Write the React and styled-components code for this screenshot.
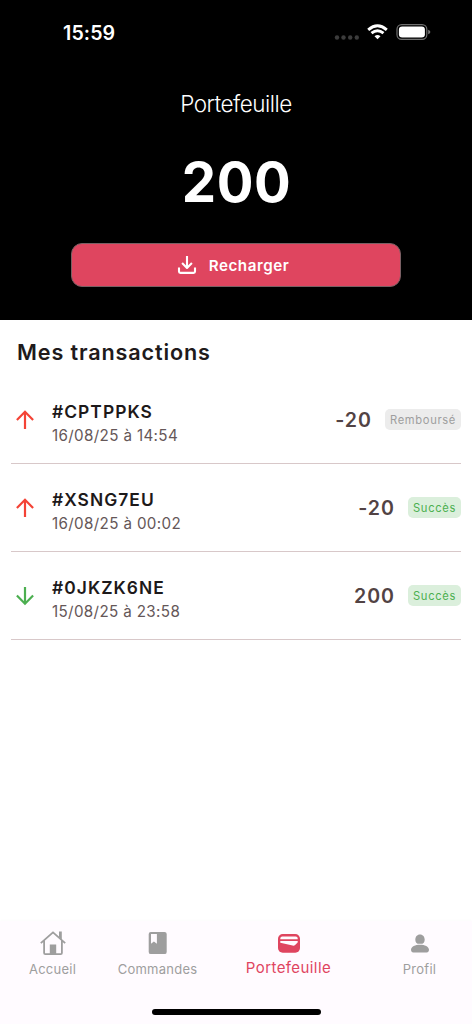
import React from "react";
import styled, { createGlobalStyle } from "styled-components";

const GlobalStyle = createGlobalStyle`
  * { box-sizing: border-box; }
  body {
    margin: 0;
    background: #fff;
    font-family: Inter, "Liberation Sans", sans-serif;
  }
`;

const Screen = styled.div`
  display: flex;
  flex-direction: column;
  width: 472px;
  height: 1024px;
  overflow: hidden;
  background: #fff;
`;

const Header = styled.header`
  display: flex;
  flex-direction: column;
  align-items: center;
  height: 320px;
  background: #000;
  color: #fff;
`;

const StatusBar = styled.div`
  display: flex;
  align-items: center;
  justify-content: space-between;
  width: 100%;
  height: 64px;
  padding: 0 41px 0 63px;
`;

const Clock = styled.span`
  padding-top: 2px;
  font-size: 19.6px;
  font-weight: 600;
  line-height: 24px;
  letter-spacing: 0.1px;
`;

const StatusIcons = styled.svg`
  display: block;
  width: 98px;
  height: 20px;
`;

const Title = styled.h1`
  margin: 26px 0 0;
  font-size: 22.5px;
  font-weight: 300;
  line-height: 28px;
  letter-spacing: -0.5px;
`;

const Balance = styled.div`
  margin-top: 28px;
  padding-left: 1px;
  font-size: 54.5px;
  font-weight: 700;
  line-height: 72px;
  letter-spacing: 0.5px;
`;

const RechargeButton = styled.button`
  display: flex;
  align-items: center;
  justify-content: center;
  gap: 12px;
  width: 330px;
  height: 44px;
  margin: 25px 0 0;
  padding: 0 6px 0 0;
  border: 1px solid #7a6064;
  border-radius: 11px;
  background: #df455f;
  color: #fff;
  font: 600 15.2px/20px Inter, sans-serif;
  letter-spacing: 0.55px;
`;

const ButtonLabel = styled.span`
  padding-top: 1px;
`;

const Main = styled.main`
  flex: 1;
  padding: 0 11px;
`;

const SectionTitle = styled.h2`
  margin: 0;
  padding: 18px 0 10px 6px;
  font-size: 21.6px;
  font-weight: 600;
  line-height: 28px;
  letter-spacing: 0.87px;
  color: #201a1b;
`;

const Transaction = styled.article`
  display: flex;
  align-items: center;
  height: 88px;
  border-bottom: 1px solid #d8c8c9;
`;

const Details = styled.div`
  flex: 1;
  padding: 8px 0 0 14px;
`;

const Reference = styled.div`
  font-size: 17.4px;
  font-weight: 600;
  line-height: 24px;
  letter-spacing: 1.05px;
  color: #1d191a;
`;

const DateText = styled.div`
  font-size: 15.2px;
  line-height: 24px;
  letter-spacing: 0.35px;
  color: #655758;
`;

const Amount = styled.div`
  margin-right: 13px;
  font-size: 19.6px;
  font-weight: 600;
  line-height: 24px;
  letter-spacing: 1px;
  color: #524344;
`;

const Badge = styled.span`
  width: ${(p) => (p.$success ? 53 : 76)}px;
  height: 21px;
  border-radius: 5px;
  background: ${(p) => (p.$success ? "#dbefdc" : "#ececec")};
  color: ${(p) => (p.$success ? "#4caf50" : "#9e9e9e")};
  font-size: 11.2px;
  font-weight: 400;
  line-height: 22px;
  letter-spacing: 0.65px;
  text-align: center;
`;

const BottomNav = styled.footer`
  height: 103px;
  background: #fffbff;
  box-shadow: 0 -1px 2px rgba(80, 50, 70, 0.015);
`;

const Tabs = styled.nav`
  display: grid;
  grid-template-columns: 105px 105px 157px 105px;
  height: 87px;
`;

const Tab = styled.div`
  display: flex;
  flex-direction: column;
  align-items: center;
  padding-top: 9px;
  color: ${(p) => (p.$active ? "#df455f" : "#9e9e9e")};
  font-size: ${(p) => (p.$active ? 15 : 13)}px;
  letter-spacing: ${(p) => (p.$active ? 0.42 : 0.25)}px;
`;

const TabLabel = styled.span`
  margin-top: ${(p) => (p.$active ? 2 : 3)}px;
  line-height: 20px;
`;

const Icon = styled.svg`
  display: block;
  flex: none;
`;

const HomeIndicator = styled.div`
  width: 169px;
  height: 6px;
  margin: 1px auto 0;
  border-radius: 3px;
  background: #000;
`;

const SystemIcons = () => (
  <StatusIcons viewBox="0 0 98 20">
    <g fill="#3c3c3c">
      <circle cx="4" cy="15.5" r="2.2" />
      <circle cx="10.5" cy="15.5" r="2.2" />
      <circle cx="17.2" cy="15.5" r="2.2" />
      <circle cx="23.8" cy="15.5" r="2.2" />
    </g>
    <g fill="none" stroke="#fff" strokeWidth="2.9">
      <path d="M35.2 7.8Q44.5-.3 53.8 7.8" />
      <path d="M38.5 11.2Q44.5 6.2 50.5 11.2" />
    </g>
    <path d="M41.5 14.2Q44.5 11.8 47.5 14.2L44.5 17.3Z" fill="#fff" />
    <rect x="64" y="2.6" width="29.800" height="14.8" rx="4.7" fill="none" stroke="#6f6f6f" strokeWidth="1.2" />
    <rect x="65.900" y="4.5" width="26" height="11" rx="3.3" fill="#fff" />
    <path d="M95.200 7.800Q97.400 8.600 97.400 10T95.200 12.300Z" fill="#777" />
  </StatusIcons>
);

const DownloadIcon = () => (
  <Icon width="20" height="20" viewBox="0 0 20 20" fill="none" stroke="currentColor" strokeWidth="2.1" strokeLinejoin="round">
    <path d="M10 1V12.8M5.1 8.1L10 13L14.900 8.100M2 12.600v3.900q0 1.400 1.400 1.400h13.200q1.400 0 1.400-1.400V12.600" />
  </Icon>
);

const ArrowIcon = ({ up }) => (
  <Icon width="27" height="24" viewBox="0 0 27 24" fill="none" stroke={up ? "#f44336" : "#4caf50"} strokeWidth="2.2">
    <path d={up ? "M14 21V4M5.900 12L14 3.800L22.100 12" : "M14 3V20M5.900 11.600L14 19.800L22.100 11.600"} />
  </Icon>
);

const HomeIcon = () => (
  <Icon width="28" height="26" viewBox="0 0 28 26" fill="none" stroke="currentColor" strokeWidth="1.8">
    <path d="M1.800 13.100L14 2.300L26.200 13.100M5.100 10.700V23q0 1.200 1.200 1.200h15.400q1.200 0 1.200-1.200V10.700" strokeLinejoin="round" />
    <path d="M20 1.500h2.800v8L20 7Z" fill="currentColor" stroke="none" />
    <path d="M10.800 14.500h6.400V24h-6.400Z" fill="currentColor" stroke="none" />
  </Icon>
);

const BookIcon = () => (
  <Icon width="26" height="26" viewBox="0.3 0 26 26" fill="currentColor">
    <path fillRule="evenodd" d="M6.200 1.900h13.600q2.200 0 2.200 2.200v17.800q0 2.200-2.200 2.200H6.200Q4 24.100 4 21.900V4.100q0-2.200 2.200-2.200ZM6.300 4.100v9.600l2.900-2.200 3 2.200V4.100Z" />
  </Icon>
);

const WalletIcon = () => (
  <Icon width="26" height="26" viewBox="0 0 26 26">
    <rect x="2" y="4" width="22" height="18.700" rx="4.700" fill="currentColor" />
    <path d="M4.300 9.200V8.500q0-2 2-2h13.400q2 0 2 2v.7Z" fill="#fffbff" />
    <path d="M4.300 11h17.400v1q0 .7-.8 1.200l-1.800 1.800q-.9.900-2.500.6L4.300 12.700Z" fill="#fffbff" />
  </Icon>
);

const ProfileIcon = () => (
  <Icon width="26" height="26" viewBox="0 0 26 26" fill="currentColor">
    <path d="M13 4.400c3 0 4.700 2.300 4.700 5.200 0 2.700-1.200 4.100-2.300 4.100h-4.800c-1.100 0-2.300-1.400-2.300-4.100 0-2.900 1.700-5.200 4.700-5.200Z" />
    <path d="M13 14.700c4.700 0 9 1.800 9 5.100 0 1.500-1 2.700-2.200 2.700H6.200C5 22.500 4 21.300 4 19.800c0-3.300 4.300-5.100 9-5.100Z" />
  </Icon>
);

const transactions = [
  { id: "#CPTPPKS", date: "16/08/25 à 14:54", amount: "-20", status: "Remboursé", up: true },
  { id: "#XSNG7EU", date: "16/08/25 à 00:02", amount: "-20", status: "Succès", up: true },
  { id: "#0JKZK6NE", date: "15/08/25 à 23:58", amount: "200", status: "Succès", up: false },
];

const tabs = [
  { label: "Accueil", Glyph: HomeIcon },
  { label: "Commandes", Glyph: BookIcon },
  { label: "Portefeuille", Glyph: WalletIcon, active: true },
  { label: "Profil", Glyph: ProfileIcon },
];

export default function App() {
  return (
    <Screen>
      <GlobalStyle />
      <Header>
        <StatusBar>
          <Clock>15:59</Clock>
          <SystemIcons />
        </StatusBar>
        <Title>Portefeuille</Title>
        <Balance>200</Balance>
        <RechargeButton>
          <DownloadIcon />
          <ButtonLabel>Recharger</ButtonLabel>
        </RechargeButton>
      </Header>
      <Main>
        <SectionTitle>Mes transactions</SectionTitle>
        {transactions.map((t) => (
          <Transaction key={t.id}>
            <ArrowIcon up={t.up} />
            <Details>
              <Reference>{t.id}</Reference>
              <DateText>{t.date}</DateText>
            </Details>
            <Amount>{t.amount}</Amount>
            <Badge $success={t.status === "Succès"}>{t.status}</Badge>
          </Transaction>
        ))}
      </Main>
      <BottomNav>
        <Tabs>
          {tabs.map(({ label, Glyph, active }) => (
            <Tab key={label} $active={active}>
              <Glyph />
              <TabLabel $active={active}>{label}</TabLabel>
            </Tab>
          ))}
        </Tabs>
        <HomeIndicator />
      </BottomNav>
    </Screen>
  );
}
